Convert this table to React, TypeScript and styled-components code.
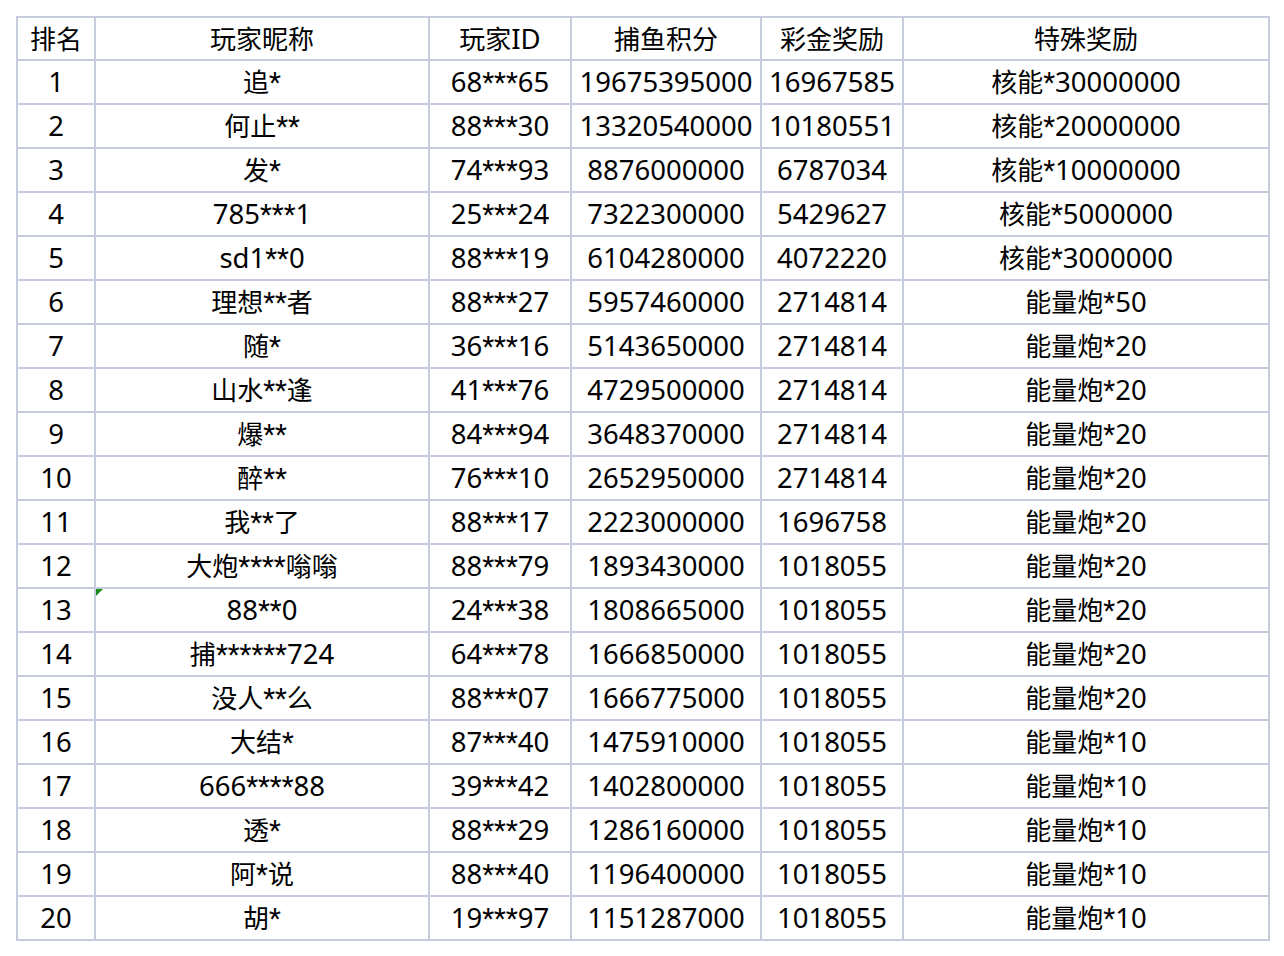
import React from "react";
import styled, { createGlobalStyle } from "styled-components";

const Global = createGlobalStyle`
  html, body { margin: 0; padding: 0; background: #ffffff; }
  body { font-family: "Noto Sans", "Noto Sans CJK SC", sans-serif; }
`;

const Page = styled.div`
  padding: 16px;
`;

const Table = styled.table`
  border-collapse: collapse;
  table-layout: fixed;
  width: 1252px;
  font-family: "Noto Sans", "Noto Sans CJK SC", sans-serif;
  font-size: 27.5px;
  color: #000;
`;

const Row = styled.tr<{ $head?: boolean }>`
  height: ${(p) => (p.$head ? 43 : 44)}px;
`;

const Cell = styled.td<{ $mark?: boolean }>`
  border: 2px solid #c6ccdc;
  padding: 0;
  text-align: center;
  vertical-align: middle;
  line-height: 1;
  white-space: nowrap;
  position: relative;
  ${(p) =>
    p.$mark
      ? `&::before {
    content: "";
    position: absolute;
    left: 0;
    top: 0;
    width: 0;
    height: 0;
    border-top: 7px solid #1a8a1a;
    border-right: 7px solid transparent;
  }`
      : ""}
`;

const Han = styled.span`
  font-family: "Noto Sans CJK SC", sans-serif;
  font-size: 26px;
`;

const Star = styled.span`
  font-family: Roboto, "Noto Sans", sans-serif;
`;

function Text({ value }: { value: string }) {
  const parts = value.match(/[\u4e00-\u9fff]+|\*+|[^\u4e00-\u9fff*]+/g) || [];
  return (
    <>
      {parts.map((p, i) =>
        /[\u4e00-\u9fff]/.test(p) ? (
          <Han key={i}>{p}</Han>
        ) : p[0] === "*" ? (
          <Star key={i}>{p}</Star>
        ) : (
          <React.Fragment key={i}>{p}</React.Fragment>
        )
      )}
    </>
  );
}

const widths = [78, 334, 142, 190, 142, 366];
const headers = ["排名", "玩家昵称", "玩家ID", "捕鱼积分", "彩金奖励", "特殊奖励"];

const rows: string[][] = [
  ["1", "追*", "68***65", "19675395000", "16967585", "核能*30000000"],
  ["2", "何止**", "88***30", "13320540000", "10180551", "核能*20000000"],
  ["3", "发*", "74***93", "8876000000", "6787034", "核能*10000000"],
  ["4", "785***1", "25***24", "7322300000", "5429627", "核能*5000000"],
  ["5", "sd1**0", "88***19", "6104280000", "4072220", "核能*3000000"],
  ["6", "理想**者", "88***27", "5957460000", "2714814", "能量炮*50"],
  ["7", "随*", "36***16", "5143650000", "2714814", "能量炮*20"],
  ["8", "山水**逢", "41***76", "4729500000", "2714814", "能量炮*20"],
  ["9", "爆**", "84***94", "3648370000", "2714814", "能量炮*20"],
  ["10", "醉**", "76***10", "2652950000", "2714814", "能量炮*20"],
  ["11", "我**了", "88***17", "2223000000", "1696758", "能量炮*20"],
  ["12", "大炮****嗡嗡", "88***79", "1893430000", "1018055", "能量炮*20"],
  ["13", "88**0", "24***38", "1808665000", "1018055", "能量炮*20"],
  ["14", "捕******724", "64***78", "1666850000", "1018055", "能量炮*20"],
  ["15", "没人**么", "88***07", "1666775000", "1018055", "能量炮*20"],
  ["16", "大结*", "87***40", "1475910000", "1018055", "能量炮*10"],
  ["17", "666****88", "39***42", "1402800000", "1018055", "能量炮*10"],
  ["18", "透*", "88***29", "1286160000", "1018055", "能量炮*10"],
  ["19", "阿*说", "88***40", "1196400000", "1018055", "能量炮*10"],
  ["20", "胡*", "19***97", "1151287000", "1018055", "能量炮*10"],
];

export default function App() {
  return (
    <Page>
      <Global />
      <Table>
        <colgroup>
          {widths.map((w, i) => (
            <col key={i} style={{ width: w }} />
          ))}
        </colgroup>
        <tbody>
          <Row $head>
            {headers.map((h) => (
              <Cell key={h}>
                <Text value={h} />
              </Cell>
            ))}
          </Row>
          {rows.map((r) => (
            <Row key={r[0]}>
              {r.map((c, i) => (
                <Cell key={i} $mark={r[0] === "13" && i === 1}>
                  <Text value={c} />
                </Cell>
              ))}
            </Row>
          ))}
        </tbody>
      </Table>
    </Page>
  );
}
